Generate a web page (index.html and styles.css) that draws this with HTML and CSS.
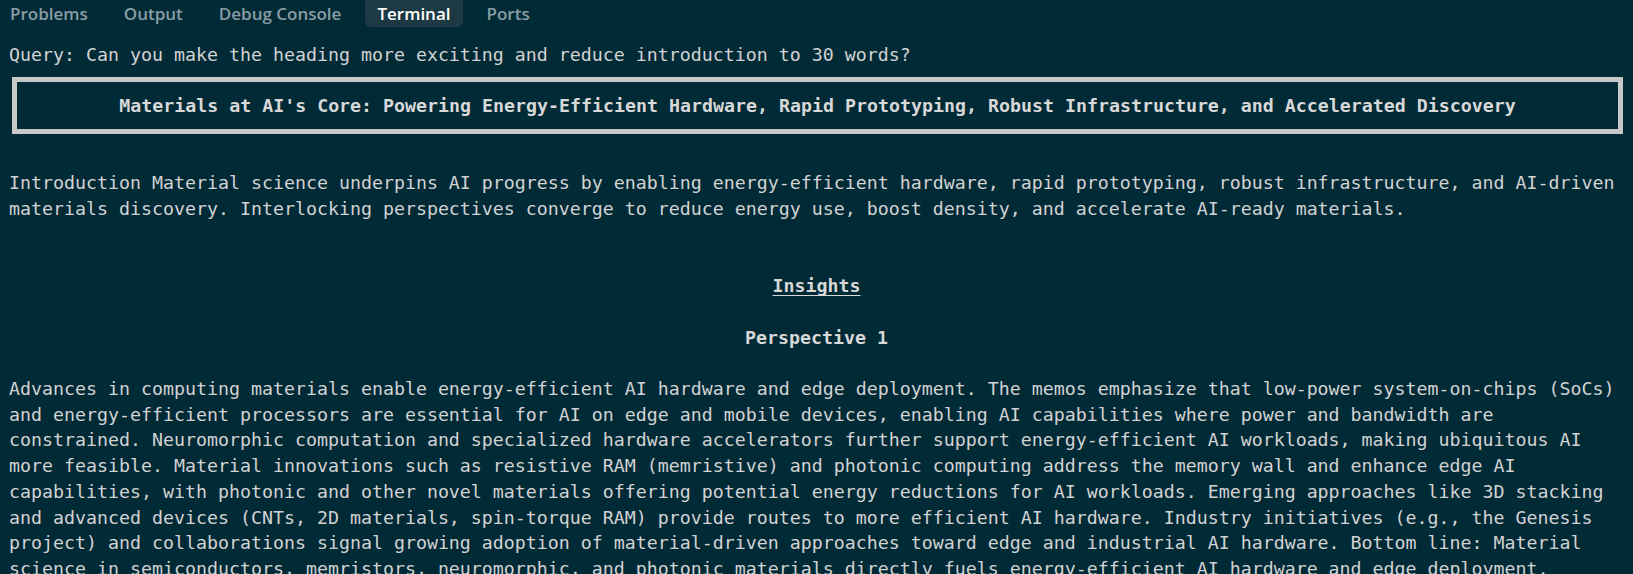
FILE: index.html
```html
<!DOCTYPE html>
<html lang="en">
<head>
<meta charset="utf-8">
<title>Terminal</title>
<link rel="stylesheet" href="styles.css">
</head>
<body>
<nav class="tabs">
  <span class="tab">Problems</span>
  <span class="tab">Output</span>
  <span class="tab">Debug Console</span>
  <span class="tab active">Terminal</span>
  <span class="tab">Ports</span>
</nav>
<main class="term">
  <p class="row">Query: Can you make the heading more exciting and reduce introduction to 30 words?</p>
  <div class="panel-wrap">
    <div class="panel">Materials at AI's Core: Powering Energy-Efficient Hardware, Rapid Prototyping, Robust Infrastructure, and Accelerated Discovery</div>
  </div>
  <p class="row gap1">Introduction Material science underpins AI progress by enabling energy-efficient hardware, rapid prototyping, robust infrastructure, and AI-driven materials discovery. Interlocking perspectives converge to reduce energy use, boost density, and accelerate AI-ready materials.</p>
  <h2 class="h2 gap2"><span class="ul">Insights</span></h2>
  <h3 class="h3 gap1">Perspective 1</h3>
  <p class="row gap1">Advances in computing materials enable energy-efficient AI hardware and edge deployment. The memos emphasize that low-power system-on-chips (SoCs) and energy-efficient processors are essential for AI on edge and mobile devices, enabling AI capabilities where power and bandwidth are constrained. Neuromorphic computation and specialized hardware accelerators further support energy-efficient AI workloads, making ubiquitous AI more feasible. Material innovations such as resistive RAM (memristive) and photonic computing address the memory wall and enhance edge AI capabilities, with photonic and other novel materials offering potential energy reductions for AI workloads. Emerging approaches like 3D stacking and advanced devices (CNTs, 2D materials, spin-torque RAM) provide routes to more efficient AI hardware. Industry initiatives (e.g., the Genesis project) and collaborations signal growing adoption of material-driven approaches toward edge and industrial AI hardware. Bottom line: Material science in semiconductors, memristors, neuromorphic, and photonic materials directly fuels energy-efficient AI hardware and edge deployment.</p>
</main>
</body>
</html>
```
FILE: styles.css
```css
html, body {
  margin: 0;
  padding: 0;
  overflow: hidden;
  background: #012a37;
}

body {
  height: 574px;
}

.tabs {
  display: flex;
  gap: 12px;
  height: 27px;
  padding-left: 0;
  font-family: "Open Sans", "Noto Sans", sans-serif;
  font-size: 17px;
  font-weight: 600;
}

.tab {
  display: flex;
  align-items: center;
  padding: 0 12px;
  color: #8a9da4;
  border-radius: 0 0 6px 6px;
}

.tab:first-child {
  padding-left: 10px;
}

.tab.active {
  background: #1d3a44;
  color: #ffffff;
}

.term {
  padding: 15px 9px 0;
  font-family: "DejaVu Sans Mono", "Liberation Mono", monospace;
  font-size: 18.27px;
  line-height: 25.7px;
  color: #d2d2d2;
}

.row {
  margin: 0;
}

.gap1 {
  margin-top: 25.7px;
}

.gap2 {
  margin-top: 51.4px;
}

.panel-wrap {
  height: 77.1px;
  box-sizing: border-box;
  padding: 9px 0 0 3px;
}

.panel {
  box-sizing: border-box;
  width: 1611px;
  height: 57px;
  border: 5px solid #c8c8c8;
  display: flex;
  align-items: center;
  justify-content: center;
  font-weight: bold;
  color: #d8d8d8;
  padding-top: 1px;
}

.h2,
.h3 {
  margin-bottom: 0;
  font-size: inherit;
  line-height: inherit;
  font-weight: bold;
  text-align: center;
  color: #d8d8d8;
}

.ul {
  text-decoration: underline;
  text-decoration-thickness: 1px;
  text-underline-offset: 3px;
}
```
